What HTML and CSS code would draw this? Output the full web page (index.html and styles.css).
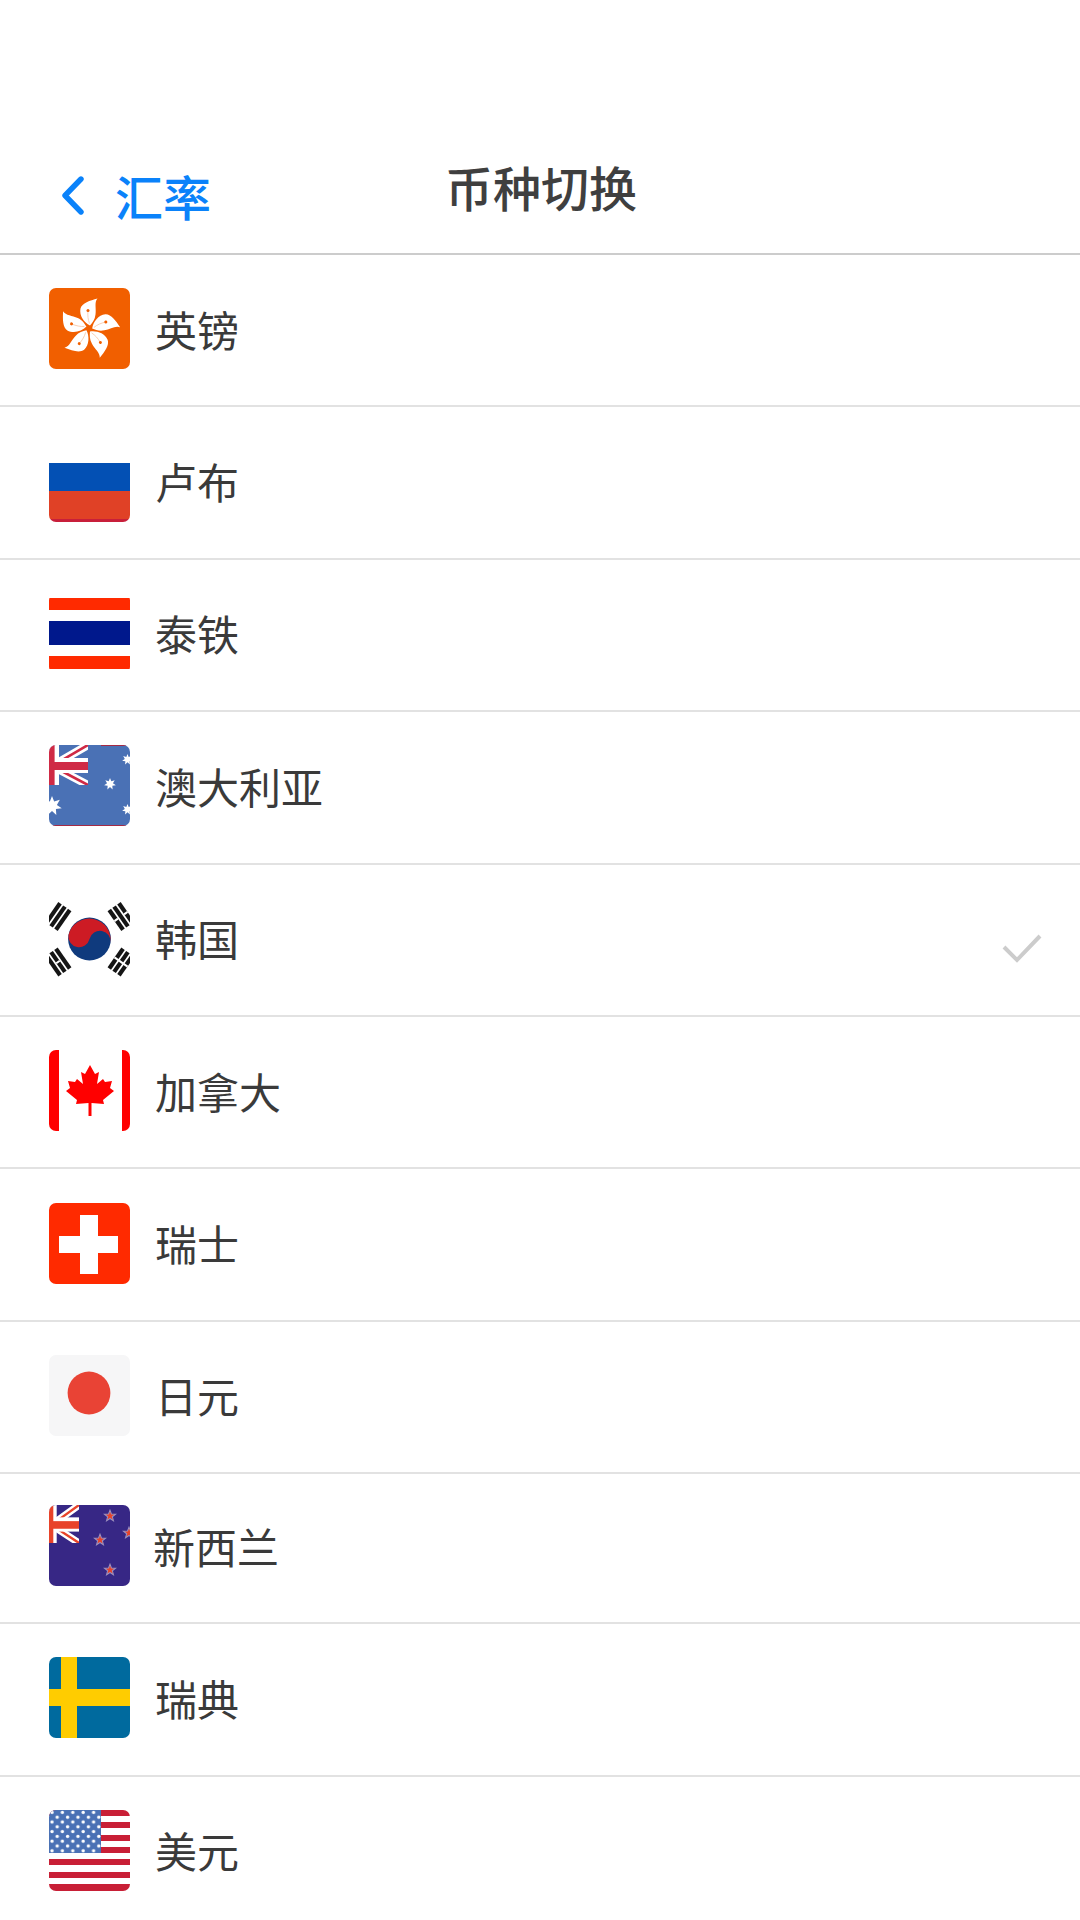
FILE: index.html

```html
<!DOCTYPE html>
<html lang="zh-CN">
<head>
  <meta charset="UTF-8">
  <meta name="viewport" content="width=device-width, initial-scale=1.0">
  <title>币种切换</title>
  <link rel="stylesheet" href="styles.css">
</head>
<body>

  <div class="header">
    <div class="back">
      <svg class="chevron" viewBox="0 0 22 40"><path d="M19 4 L3 20.5 L19 37" fill="none" stroke="#0a82fa" stroke-width="5.4" stroke-linecap="round" stroke-linejoin="round"/></svg>
      <span>汇率</span>
    </div>
    <h1>币种切换</h1>
  </div>

  <div class="list">

    <div class="row">
      <svg class="flag" viewBox="0 0 81 81">
        <rect width="81" height="81" fill="#f15f00"/>
        <g transform="translate(40 40.5)">
          <use href="#petal"/>
          <use href="#petal" transform="rotate(72)"/>
          <use href="#petal" transform="rotate(144)"/>
          <use href="#petal" transform="rotate(216)"/>
          <use href="#petal" transform="rotate(288)"/>
        </g>
      </svg>
      <span class="name">英镑</span>
    </div>

    <div class="row">
      <svg class="flag" viewBox="0 0 81 81">
        <rect y="22" width="81" height="28" fill="#0350b4"/>
        <rect y="50" width="81" height="28" fill="#e04126"/>
        <rect y="78" width="81" height="3" fill="#c81f3a"/>
      </svg>
      <span class="name">卢布</span>
    </div>

    <div class="row">
      <svg class="flag" viewBox="0 0 81 81">
        <rect y="5" width="81" height="12" fill="#ff2a00"/>
        <rect y="28" width="81" height="24" fill="#00188c"/>
        <rect y="63" width="81" height="13" fill="#ff2a00"/>
      </svg>
      <span class="name">泰铁</span>
    </div>

    <div class="row">
      <svg class="flag" viewBox="0 0 81 81">
        <rect width="81" height="81" fill="#4a71b5"/>
        <rect x="52" width="29" height="1" fill="#a52a44"/>
        <rect y="80" width="81" height="1" fill="#a52a44"/>
        <use href="#jack" class="jack-au" width="39" height="40"/>
        <use href="#star7" x="-7" y="51" width="20" height="20"/>
        <use href="#star7" x="55" y="33" width="12" height="12"/>
        <use href="#star7" x="73" y="9" width="11" height="11"/>
        <use href="#star7" x="73" y="59" width="11" height="11"/>
      </svg>
      <span class="name">澳大利亚</span>
    </div>

    <div class="row">
      <svg class="flag" viewBox="0 0 81 81">
        <g transform="translate(40.5 41)">
          <circle r="21.4" fill="#0f3a7d"/>
          <path d="M-21 -4 A21.4 21.4 0 0 1 21 4 A10.7 10.7 0 0 0 0 0 A10.7 10.7 0 0 1 -21 -4 Z" fill="#cd1b24"/>
        </g>
        <g fill="#151515">
          <g transform="translate(9 18.5) rotate(-55)">
            <rect x="-12" y="-8" width="24" height="4.2"/>
            <rect x="-12" y="-2.1" width="24" height="4.2"/>
            <rect x="-12" y="3.8" width="24" height="4.2"/>
          </g>
          <g transform="translate(72 18.5) rotate(55)">
            <rect x="-12" y="-8" width="24" height="4.2"/>
            <rect x="-12" y="-2.1" width="24" height="4.2"/>
            <rect x="-12" y="3.8" width="24" height="4.2"/>
            <rect x="-1" y="-8" width="2" height="4.2" fill="#fff"/>
            <rect x="-1" y="3.8" width="2" height="4.2" fill="#fff"/>
          </g>
          <g transform="translate(9 64) rotate(55)">
            <rect x="-12" y="-8" width="24" height="4.2"/>
            <rect x="-12" y="-2.1" width="24" height="4.2"/>
            <rect x="-12" y="3.8" width="24" height="4.2"/>
            <rect x="-1" y="-2.1" width="2" height="4.2" fill="#fff"/>
          </g>
          <g transform="translate(72 64) rotate(-55)">
            <rect x="-12" y="-8" width="24" height="4.2"/>
            <rect x="-12" y="-2.1" width="24" height="4.2"/>
            <rect x="-12" y="3.8" width="24" height="4.2"/>
            <rect x="-1" y="-8" width="2" height="16" fill="#fff"/>
          </g>
        </g>
      </svg>
      <span class="name">韩国</span>
      <svg class="check" viewBox="0 0 40 30"><path d="M2 13 L15 26 L38 2" fill="none" stroke="#cccccc" stroke-width="4"/></svg>
    </div>

    <div class="row">
      <svg class="flag" viewBox="0 0 81 81">
        <rect width="10" height="81" fill="#ff0000"/>
        <rect x="73" width="8" height="81" fill="#ff0000"/>
        <polygon fill="#ff0000" points="41,15 46,24 50,22 48,34 54,29 56,32 63,31 61,38 65,41 54,50 55,54 42.5,53 42.5,66 39.5,66 39.5,53 27,54 28,50 17,41 21,38 19,31 26,32 28,29 34,34 32,22 36,24"/>
      </svg>
      <span class="name">加拿大</span>
    </div>

    <div class="row">
      <svg class="flag" viewBox="0 0 81 81">
        <rect width="81" height="81" fill="#ff2a00"/>
        <rect x="31" y="12" width="18" height="59" fill="#fff"/>
        <rect x="10" y="33" width="59" height="17" fill="#fff"/>
      </svg>
      <span class="name">瑞士</span>
    </div>

    <div class="row">
      <svg class="flag" viewBox="0 0 81 81">
        <rect width="81" height="81" fill="#f6f6f7"/>
        <circle cx="40" cy="38" r="21.4" fill="#e94335"/>
      </svg>
      <span class="name">日元</span>
    </div>

    <div class="row row-short">
      <svg class="flag" viewBox="0 0 81 81">
        <rect width="81" height="81" fill="#372785"/>
        <use href="#jack" class="jack-nz" width="30" height="38"/>
        <use href="#star5" class="star-nz" x="54" y="4" width="14" height="14"/>
        <use href="#star5" class="star-nz" x="44" y="28" width="14" height="14"/>
        <use href="#star5" class="star-nz" x="73" y="21" width="14" height="14"/>
        <use href="#star5" class="star-nz" x="54" y="58" width="14" height="14"/>
      </svg>
      <span class="name name-nz">新西兰</span>
    </div>

    <div class="row">
      <svg class="flag" viewBox="0 0 81 81">
        <rect width="81" height="81" fill="#006a9e"/>
        <rect x="12" width="16" height="81" fill="#ffcc00"/>
        <rect y="32" width="81" height="17" fill="#ffcc00"/>
      </svg>
      <span class="name">瑞典</span>
    </div>

    <div class="row">
      <svg class="flag" viewBox="0 0 81 81">
        <rect y="0" width="81" height="6" fill="#c81f36"/>
        <rect y="12" width="81" height="6" fill="#c81f36"/>
        <rect y="25" width="81" height="6" fill="#c81f36"/>
        <rect y="37" width="81" height="6" fill="#c81f36"/>
        <rect y="49" width="81" height="6" fill="#c81f36"/>
        <rect y="62" width="81" height="6" fill="#c81f36"/>
        <rect y="74" width="81" height="7" fill="#c81f36"/>
        <rect width="52" height="43" fill="#4a71b5"/>
        <rect width="52" height="43" fill="url(#usa-stars)"/>
      </svg>
      <span class="name">美元</span>
    </div>

  </div>

  <!-- shared flag parts -->
  <svg class="defs">
    <defs>
      <symbol id="petal" viewBox="-15 -32 30 36" x="-15" y="-32" width="30" height="36">
        <path d="M1 -3 C-5 -6 -10 -13 -8.5 -20 C-7 -25.5 1 -28 8.5 -30 C5 -26 7.5 -20 6.5 -14 C6 -9 3.5 -6 1 -3 Z" fill="#fff"/>
        <path d="M0.5 -5 C-1 -9 -1.5 -13 -1 -18" fill="none" stroke="#f8c9a8" stroke-width="0.8"/>
        <circle cx="-1" cy="-18" r="1.5" fill="#f15f00"/>
      </symbol>

      <symbol id="jack" viewBox="0 0 39 40" preserveAspectRatio="none">
        <path d="M3 21 L39 0 M3 21 L39 40" stroke="#fff" stroke-width="8"/>
        <path d="M3 21 L39 0 M3 21 L39 40" stroke="currentColor" stroke-width="2.6"/>
        <rect width="10" height="40" fill="#fff"/>
        <rect y="13" width="39" height="15" fill="#fff"/>
        <rect width="5.6" height="40" fill="currentColor"/>
        <rect y="17" width="39" height="8" fill="currentColor"/>
      </symbol>

      <symbol id="star7" viewBox="-1 -1 2 2">
        <polygon fill="#fff" points="0,-1 .217,-.45 .782,-.623 .488,-.111 .975,.223 .391,.312 .434,.901 0,.5 -.434,.901 -.391,.312 -.975,.223 -.488,-.111 -.782,-.623 -.217,-.45"/>
      </symbol>

      <symbol id="star5" viewBox="-1.2 -1.2 2.4 2.4">
        <polygon points="0,-1 .247,-.34 .951,-.309 .4,.13 .588,.809 0,.42 -.588,.809 -.4,.13 -.951,-.309 -.247,-.34"/>
      </symbol>

      <pattern id="usa-stars" width="10.4" height="9.6" patternUnits="userSpaceOnUse">
        <circle cx="3" cy="2.4" r="1.7" fill="#fff"/>
        <circle cx="8.2" cy="7.2" r="1.7" fill="#fff"/>
      </pattern>
    </defs>
  </svg>

</body>
</html>
```

FILE: styles.css

```css
html, body {
  height: 1920px;
  overflow: hidden;
}
body {
  font-family: "Noto Sans CJK SC", "Noto Sans", sans-serif;
  background-color: #fff;
  color: #3a3a3a;
  margin: 0;
}

.header {
  height: 253px;
  border-bottom: 2px solid #cccccc;
  display: grid;
  grid-template-columns: 1fr auto 1fr;
  padding: 0 0 0 56px;
  align-items: start;
}
.back {
  grid-column: 1;
  grid-row: 1;
  display: flex;
  align-items: center;
  margin-top: 161px;
  color: #0a82fa;
  font-size: 48px;
  font-weight: 500;
  line-height: 68px;
}
.chevron {
  width: 22px;
  height: 40px;
  margin-right: 31px;
  margin-left: 6px;
}
h1 {
  grid-column: 2;
  grid-row: 1;
  margin: 152px 54px 0 0;
  font-size: 48px;
  font-weight: 500;
  line-height: 68px;
  color: #3f3f3f;
}

.row {
  height: 152.4px;
  box-sizing: border-box;
  border-bottom: 2px solid #e2e2e2;
  padding: 0 38px 3px 49px;
  display: flex;
  align-items: center;
}
.row-short {
  height: 150px;
  padding-bottom: 5px;
}

.flag {
  width: 81px;
  height: 81px;
  flex: none;
  border-radius: 7px;
}
.name {
  margin-left: 25px;
  font-size: 42px;
  line-height: 60px;
}
.name-nz {
  margin-left: 23px;
}
.check {
  width: 40px;
  height: 30px;
  margin-left: auto;
  margin-top: 21px;
}

.jack-au {
  color: #cf2a45;
}
.jack-nz {
  color: #e8432a;
}
.star-nz {
  fill: #e8432a;
  stroke: #9a8fc0;
  stroke-width: 0.18;
}

.defs {
  display: block;
  width: 0;
  height: 0;
}
```
